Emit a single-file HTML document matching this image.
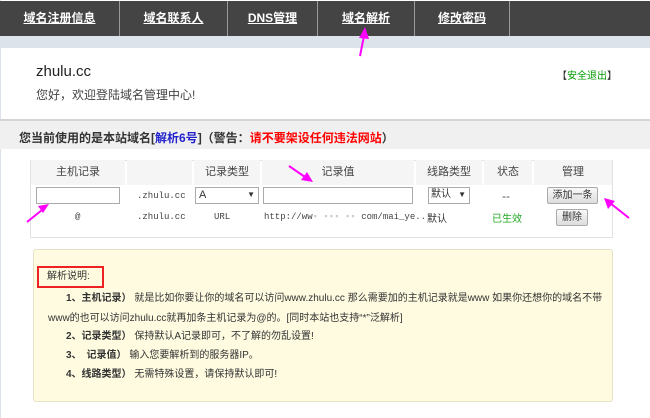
<!DOCTYPE html>
<html><head><meta charset="utf-8"><style>
*{margin:0;padding:0;box-sizing:border-box}
body{width:650px;height:418px;background:#fff;font-family:"Liberation Sans","Noto Sans CJK SC",sans-serif;font-size:12px;color:#333;position:relative;overflow:hidden}
.nav{position:absolute;left:0;top:1px;width:650px;height:35px;background:#444}
.nav div{position:absolute;top:0;height:35px;border-right:1px solid #999;color:#fff;font-weight:bold;font-size:12px;text-align:center;line-height:35px;text-decoration:underline}
.band{position:absolute;left:0;top:36px;width:650px;height:12px;background:#dde3ea}
.a{position:absolute;white-space:nowrap}
.gray{position:absolute;left:0;top:119px;width:650px;height:30px;background:#f0f0f0;border-top:2px solid #d4d4d4}
.tbl{position:absolute;left:30px;top:160px;width:583px;height:78px;border:1px solid #e2e2e2}
.hd{position:absolute;top:160px;height:25px;background:#f5f5f5;text-align:center;line-height:25px;color:#444;font-size:11px}
.inp{position:absolute;height:17px;border:1px solid #aaa;background:#fff}
.btn{position:absolute;border:1px solid #aaa;background:linear-gradient(#f8f8f8,#ddd);font-size:10px;text-align:center;border-radius:2px;white-space:nowrap}
.mono{font-family:"Liberation Mono","Noto Sans CJK SC",monospace;font-size:9px;color:#444}
.yel{position:absolute;left:33px;top:249px;width:580px;height:153px;background:#fefbe0;border:1px solid #e6e2c6;border-radius:3px}
.t{position:absolute;white-space:nowrap;font-size:10px;color:#333}
</style></head><body>
<div style="position:absolute;left:0;top:0;width:1px;height:418px;background:#dde3ea"></div>
<div class="nav">
<div style="left:0;width:120px">域名注册信息</div>
<div style="left:120px;width:108px">域名联系人</div>
<div style="left:228px;width:90px">DNS管理</div>
<div style="left:318px;width:97px">域名解析</div>
<div style="left:415px;width:95px">修改密码</div>
</div>
<div class="band"></div>
<div class="a" style="left:36px;top:63px;font-size:15px;color:#222">zhulu.cc</div>
<div class="a" style="left:36px;top:86px;font-size:12px;color:#444">您好，欢迎登陆域名管理中心!</div>
<div class="a" style="left:557px;top:67px;font-size:10px;color:#090"><span style="color:#333">【</span>安全退出<span style="color:#333">】</span></div>
<div class="gray"></div>
<div class="a" style="left:19px;top:129px;font-size:12px;font-weight:bold;color:#333">您当前使用的是本站域名[<span style="color:#22c">解析6号</span>]（警告：<span style="color:#f00">请不要架设任何违法网站</span>）</div>
<div class="tbl"></div>
<div class="hd" style="left:31px;width:94px">主机记录</div>
<div class="hd" style="left:127px;width:65px"></div>
<div class="hd" style="left:194px;width:66px">记录类型</div>
<div class="hd" style="left:262px;width:152px">记录值</div>
<div class="hd" style="left:416px;width:66px">线路类型</div>
<div class="hd" style="left:484px;width:48px">状态</div>
<div class="hd" style="left:534px;width:78px">管理</div>
<div class="inp" style="left:36px;top:187px;width:84px"></div>
<div class="a mono" style="left:137px;top:191px">.zhulu.cc</div>
<div class="inp" style="left:195px;top:187px;width:64px;font-size:11px;padding-left:3px;line-height:14px">A<span style="position:absolute;right:3px;font-size:8px">▼</span></div>
<div class="inp" style="left:263px;top:187px;width:150px"></div>
<div class="inp" style="left:428px;top:187px;width:42px;font-size:10px;padding-left:2px;line-height:14px">默认<span style="position:absolute;right:3px;font-size:8px">▼</span></div>
<div class="a" style="left:502px;top:189px;color:#555">--</div>
<div class="btn" style="left:547px;top:187px;width:51px;height:17px;line-height:15px">添加一条</div>
<div class="a mono" style="left:75px;top:212px">@</div>
<div class="a mono" style="left:137px;top:212px">.zhulu.cc</div>
<div class="a mono" style="left:214px;top:212px">URL</div>
<div class="a mono" style="left:264px;top:212px">http://ww<span style="color:#ccc">▪ ▪▪▪ ▪▪</span> com/mai_ye..</div>
<div class="a" style="left:427px;top:210px;font-size:10px">默认</div>
<div class="a" style="left:492px;top:210px;font-size:10px;color:#2a2">已生效</div>
<div class="btn" style="left:556px;top:209px;width:32px;height:17px;line-height:15px">删除</div>
<div class="yel"></div>
<div class="t" style="left:37px;top:266px;width:67px;height:22px;border:2px solid #e22;padding-left:8px;line-height:18px">解析说明:</div>
<div class="t" style="left:66px;top:289px"><b>1、主机记录）</b> 就是比如你要让你的域名可以访问www.zhulu.cc 那么需要加的主机记录就是www 如果你还想你的域名不带</div>
<div class="t" style="left:48px;top:309px">www的也可以访问zhulu.cc就再加条主机记录为@的。[同时本站也支持“*”泛解析]</div>
<div class="t" style="left:66px;top:327px"><b>2、记录类型）</b> 保持默认A记录即可，不了解的勿乱设置!</div>
<div class="t" style="left:66px;top:346px"><b>3、　记录值）</b> 输入您要解析到的服务器IP。</div>
<div class="t" style="left:66px;top:365px"><b>4、线路类型）</b> 无需特殊设置，请保持默认即可!</div>
<svg class="a" style="left:0;top:0" width="650" height="418">
<g stroke="#f0f" fill="#f0f" stroke-width="2">
<line x1="360" y1="56" x2="364" y2="36"/><polygon points="359,38 365,27 369,39" stroke="none"/>
<line x1="27" y1="222" x2="42" y2="210"/><polygon points="38,206 49,204 43,213" stroke="none"/>
<line x1="289" y1="166" x2="305" y2="177"/><polygon points="301,180 313,182 307,172" stroke="none"/>
<line x1="629" y1="218" x2="610" y2="203"/><polygon points="604,198 615,201 608,209" stroke="none"/>
</g></svg>
</body></html>
